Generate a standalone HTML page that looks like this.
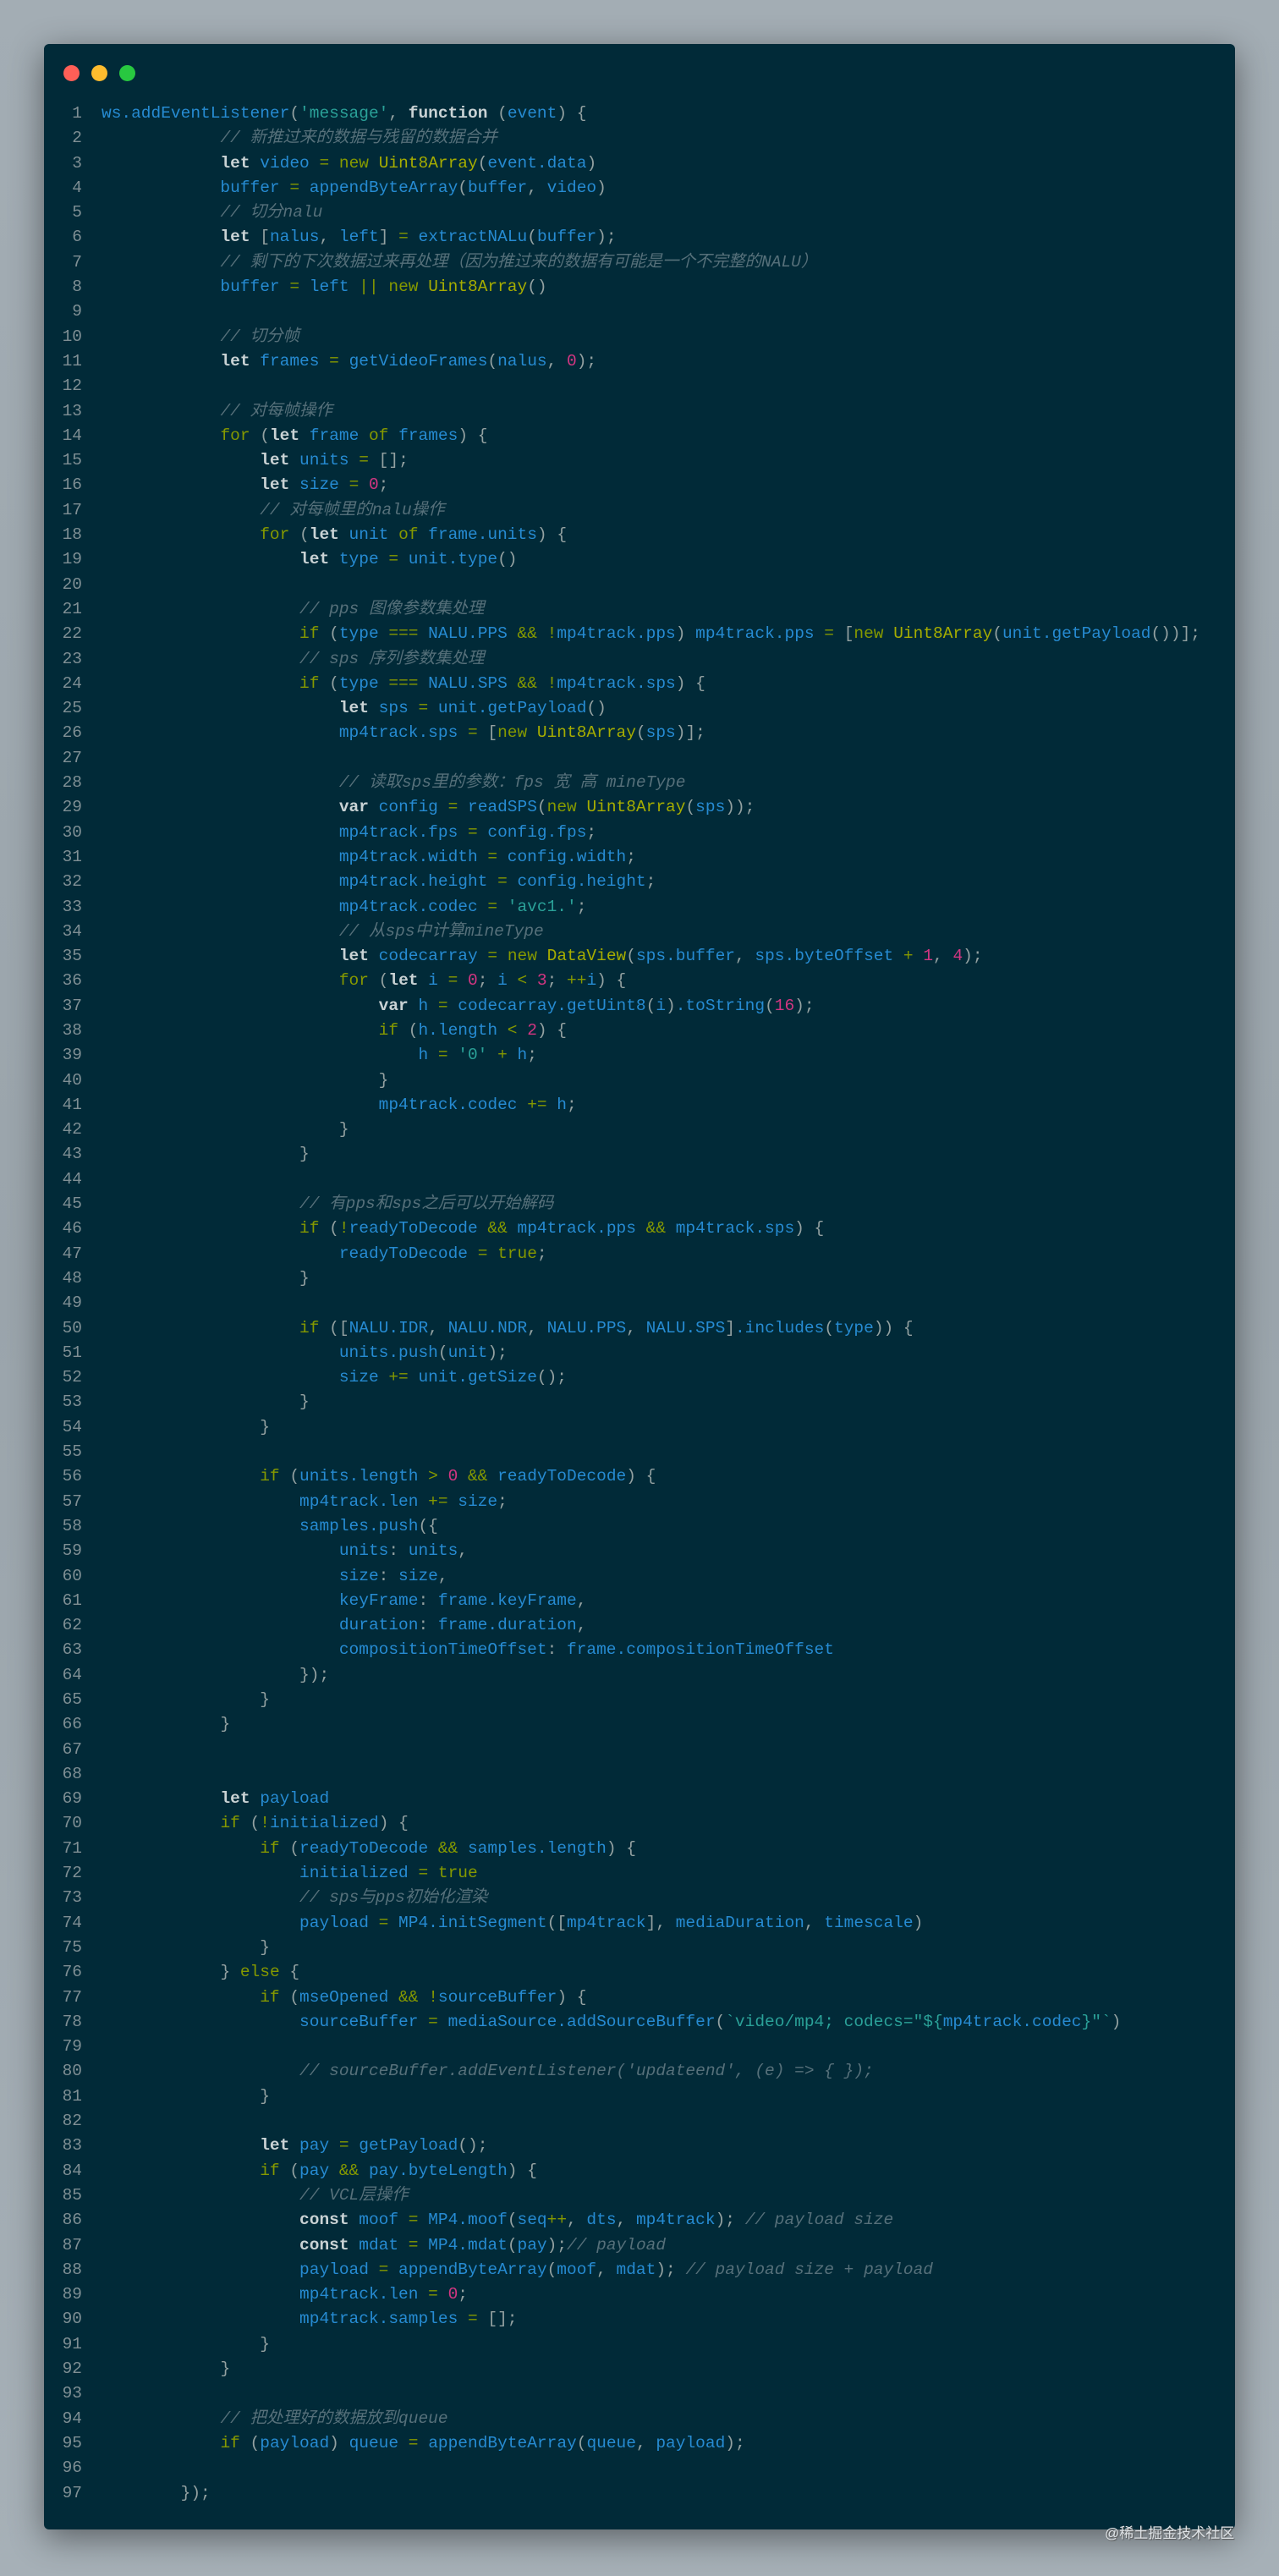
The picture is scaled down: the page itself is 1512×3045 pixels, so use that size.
<!DOCTYPE html>
<html><head><meta charset="utf-8"><style>
html,body{margin:0;padding:0}
body{width:1512px;height:3045px;background:linear-gradient(180deg,#a3adb4 0%,#9aa4ab 50%,#a6b0b7 100%);position:relative;overflow:hidden;font-family:"Liberation Mono","Noto Sans CJK SC",monospace}
.win{position:absolute;left:52px;top:52px;width:1408px;height:2938px;background:#012a38;border-radius:6px;box-shadow:0 10px 40px rgba(0,0,0,.45)}
.dot{position:absolute;top:77px;width:19px;height:19px;border-radius:50%}
pre{margin:0;position:absolute;top:120px;font-size:19.5px;line-height:29.3px;font-family:"Liberation Mono","Noto Sans CJK SC",monospace}
.nums{left:60px;width:37px;text-align:right;color:#7f8f94}
.code{left:120px;color:#268bd2}
.k{color:#859900}.b{color:#c9d2d4;font-weight:bold}.c{color:#56707a;font-style:italic}.s{color:#2aa198}.n{color:#d33682}.p{color:#93a1a1}.y{color:#a6ad00}
.wm{position:absolute;left:1306px;top:2980px;font-size:17px;color:#dfe3e6;text-shadow:1px 1px 1px #555;font-family:"Liberation Sans","Noto Sans CJK SC",sans-serif}
</style></head><body>
<div class="win"></div>
<div class="dot" style="left:75px;background:#ff5f57"></div>
<div class="dot" style="left:108px;background:#febc2e"></div>
<div class="dot" style="left:141px;background:#28c840"></div>
<pre class="nums">1
2
3
4
5
6
7
8
9
10
11
12
13
14
15
16
17
18
19
20
21
22
23
24
25
26
27
28
29
30
31
32
33
34
35
36
37
38
39
40
41
42
43
44
45
46
47
48
49
50
51
52
53
54
55
56
57
58
59
60
61
62
63
64
65
66
67
68
69
70
71
72
73
74
75
76
77
78
79
80
81
82
83
84
85
86
87
88
89
90
91
92
93
94
95
96
97</pre>
<pre class="code">ws.addEventListener<span class="p">(</span><span class="s">'message'</span><span class="p">,</span> <span class="b">function</span> <span class="p">(</span>event<span class="p">) {</span>
            <span class="c">// 新推过来的数据与残留的数据合并</span>
            <span class="b">let</span> video <span class="k">=</span> <span class="k">new</span> <span class="y">Uint8Array</span><span class="p">(</span>event.data<span class="p">)</span>
            buffer <span class="k">=</span> appendByteArray<span class="p">(</span>buffer<span class="p">,</span> video<span class="p">)</span>
            <span class="c">// 切分nalu</span>
            <span class="b">let</span> <span class="p">[</span>nalus<span class="p">,</span> left<span class="p">]</span> <span class="k">=</span> extractNALu<span class="p">(</span>buffer<span class="p">);</span>
            <span class="c">// 剩下的下次数据过来再处理（因为推过来的数据有可能是一个不完整的NALU）</span>
            buffer <span class="k">=</span> left <span class="k">||</span> <span class="k">new</span> <span class="y">Uint8Array</span><span class="p">()</span>

            <span class="c">// 切分帧</span>
            <span class="b">let</span> frames <span class="k">=</span> getVideoFrames<span class="p">(</span>nalus<span class="p">,</span> <span class="n">0</span><span class="p">);</span>

            <span class="c">// 对每帧操作</span>
            <span class="k">for</span> <span class="p">(</span><span class="b">let</span> frame <span class="k">of</span> frames<span class="p">) {</span>
                <span class="b">let</span> units <span class="k">=</span> <span class="p">[];</span>
                <span class="b">let</span> size <span class="k">=</span> <span class="n">0</span><span class="p">;</span>
                <span class="c">// 对每帧里的nalu操作</span>
                <span class="k">for</span> <span class="p">(</span><span class="b">let</span> unit <span class="k">of</span> frame.units<span class="p">) {</span>
                    <span class="b">let</span> type <span class="k">=</span> unit.type<span class="p">()</span>

                    <span class="c">// pps 图像参数集处理</span>
                    <span class="k">if</span> <span class="p">(</span>type <span class="k">===</span> NALU.PPS <span class="k">&amp;&amp;</span> <span class="k">!</span>mp4track.pps<span class="p">)</span> mp4track.pps <span class="k">=</span> <span class="p">[</span><span class="k">new</span> <span class="y">Uint8Array</span><span class="p">(</span>unit.getPayload<span class="p">())];</span>
                    <span class="c">// sps 序列参数集处理</span>
                    <span class="k">if</span> <span class="p">(</span>type <span class="k">===</span> NALU.SPS <span class="k">&amp;&amp;</span> <span class="k">!</span>mp4track.sps<span class="p">) {</span>
                        <span class="b">let</span> sps <span class="k">=</span> unit.getPayload<span class="p">()</span>
                        mp4track.sps <span class="k">=</span> <span class="p">[</span><span class="k">new</span> <span class="y">Uint8Array</span><span class="p">(</span>sps<span class="p">)];</span>

                        <span class="c">// 读取sps里的参数：fps 宽 高 mineType</span>
                        <span class="b">var</span> config <span class="k">=</span> readSPS<span class="p">(</span><span class="k">new</span> <span class="y">Uint8Array</span><span class="p">(</span>sps<span class="p">));</span>
                        mp4track.fps <span class="k">=</span> config.fps<span class="p">;</span>
                        mp4track.width <span class="k">=</span> config.width<span class="p">;</span>
                        mp4track.height <span class="k">=</span> config.height<span class="p">;</span>
                        mp4track.codec <span class="k">=</span> <span class="s">'avc1.'</span><span class="p">;</span>
                        <span class="c">// 从sps中计算mineType</span>
                        <span class="b">let</span> codecarray <span class="k">=</span> <span class="k">new</span> <span class="y">DataView</span><span class="p">(</span>sps.buffer<span class="p">,</span> sps.byteOffset <span class="k">+</span> <span class="n">1</span><span class="p">,</span> <span class="n">4</span><span class="p">);</span>
                        <span class="k">for</span> <span class="p">(</span><span class="b">let</span> i <span class="k">=</span> <span class="n">0</span><span class="p">;</span> i <span class="k">&lt;</span> <span class="n">3</span><span class="p">;</span> <span class="k">++</span>i<span class="p">) {</span>
                            <span class="b">var</span> h <span class="k">=</span> codecarray.getUint8<span class="p">(</span>i<span class="p">)</span>.toString<span class="p">(</span><span class="n">16</span><span class="p">);</span>
                            <span class="k">if</span> <span class="p">(</span>h.length <span class="k">&lt;</span> <span class="n">2</span><span class="p">) {</span>
                                h <span class="k">=</span> <span class="s">'0'</span> <span class="k">+</span> h<span class="p">;</span>
                            <span class="p">}</span>
                            mp4track.codec <span class="k">+=</span> h<span class="p">;</span>
                        <span class="p">}</span>
                    <span class="p">}</span>

                    <span class="c">// 有pps和sps之后可以开始解码</span>
                    <span class="k">if</span> <span class="p">(</span><span class="k">!</span>readyToDecode <span class="k">&amp;&amp;</span> mp4track.pps <span class="k">&amp;&amp;</span> mp4track.sps<span class="p">) {</span>
                        readyToDecode <span class="k">=</span> <span class="k">true</span><span class="p">;</span>
                    <span class="p">}</span>

                    <span class="k">if</span> <span class="p">([</span>NALU.IDR<span class="p">,</span> NALU.NDR<span class="p">,</span> NALU.PPS<span class="p">,</span> NALU.SPS<span class="p">]</span>.includes<span class="p">(</span>type<span class="p">)) {</span>
                        units.push<span class="p">(</span>unit<span class="p">);</span>
                        size <span class="k">+=</span> unit.getSize<span class="p">();</span>
                    <span class="p">}</span>
                <span class="p">}</span>

                <span class="k">if</span> <span class="p">(</span>units.length <span class="k">&gt;</span> <span class="n">0</span> <span class="k">&amp;&amp;</span> readyToDecode<span class="p">) {</span>
                    mp4track.len <span class="k">+=</span> size<span class="p">;</span>
                    samples.push<span class="p">({</span>
                        units<span class="p">:</span> units<span class="p">,</span>
                        size<span class="p">:</span> size<span class="p">,</span>
                        keyFrame<span class="p">:</span> frame.keyFrame<span class="p">,</span>
                        duration<span class="p">:</span> frame.duration<span class="p">,</span>
                        compositionTimeOffset<span class="p">:</span> frame.compositionTimeOffset
                    <span class="p">});</span>
                <span class="p">}</span>
            <span class="p">}</span>


            <span class="b">let</span> payload
            <span class="k">if</span> <span class="p">(</span><span class="k">!</span>initialized<span class="p">) {</span>
                <span class="k">if</span> <span class="p">(</span>readyToDecode <span class="k">&amp;&amp;</span> samples.length<span class="p">) {</span>
                    initialized <span class="k">=</span> <span class="k">true</span>
                    <span class="c">// sps与pps初始化渲染</span>
                    payload <span class="k">=</span> MP4.initSegment<span class="p">([</span>mp4track<span class="p">],</span> mediaDuration<span class="p">,</span> timescale<span class="p">)</span>
                <span class="p">}</span>
            <span class="p">}</span> <span class="k">else</span> <span class="p">{</span>
                <span class="k">if</span> <span class="p">(</span>mseOpened <span class="k">&amp;&amp;</span> <span class="k">!</span>sourceBuffer<span class="p">) {</span>
                    sourceBuffer <span class="k">=</span> mediaSource.addSourceBuffer<span class="p">(</span><span class="s">`video/mp4; codecs="${</span>mp4track.codec<span class="s">}"`</span><span class="p">)</span>

                    <span class="c">// sourceBuffer.addEventListener('updateend', (e) =&gt; { });</span>
                <span class="p">}</span>

                <span class="b">let</span> pay <span class="k">=</span> getPayload<span class="p">();</span>
                <span class="k">if</span> <span class="p">(</span>pay <span class="k">&amp;&amp;</span> pay.byteLength<span class="p">) {</span>
                    <span class="c">// VCL层操作</span>
                    <span class="b">const</span> moof <span class="k">=</span> MP4.moof<span class="p">(</span>seq<span class="k">++</span><span class="p">,</span> dts<span class="p">,</span> mp4track<span class="p">);</span> <span class="c">// payload size</span>
                    <span class="b">const</span> mdat <span class="k">=</span> MP4.mdat<span class="p">(</span>pay<span class="p">);</span><span class="c">// payload</span>
                    payload <span class="k">=</span> appendByteArray<span class="p">(</span>moof<span class="p">,</span> mdat<span class="p">);</span> <span class="c">// payload size + payload</span>
                    mp4track.len <span class="k">=</span> <span class="n">0</span><span class="p">;</span>
                    mp4track.samples <span class="k">=</span> <span class="p">[];</span>
                <span class="p">}</span>
            <span class="p">}</span>

            <span class="c">// 把处理好的数据放到queue</span>
            <span class="k">if</span> <span class="p">(</span>payload<span class="p">)</span> queue <span class="k">=</span> appendByteArray<span class="p">(</span>queue<span class="p">,</span> payload<span class="p">);</span>

        <span class="p">});</span></pre>
<div class="wm">@稀土掘金技术社区</div>
</body></html>
